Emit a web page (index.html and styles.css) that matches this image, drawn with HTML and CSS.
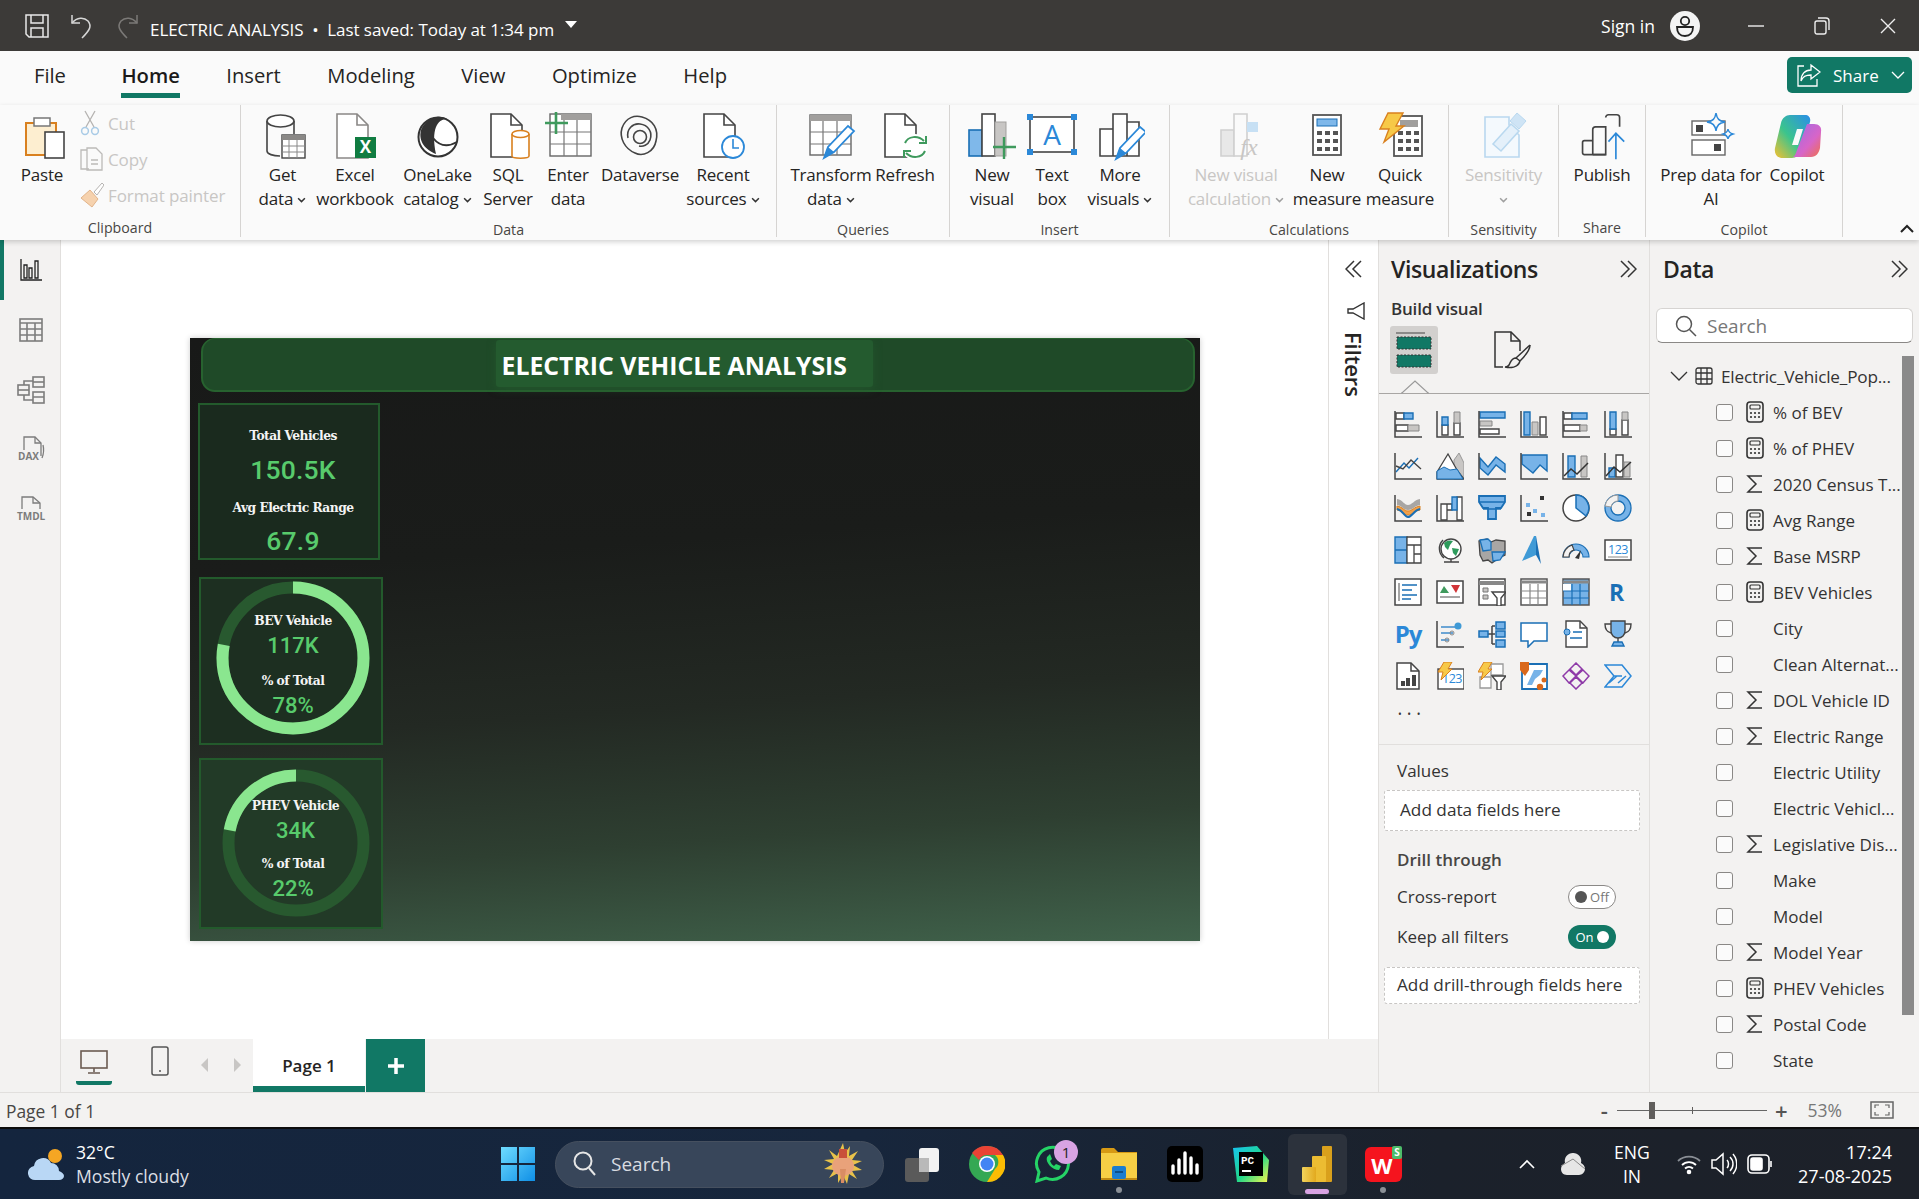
FILE: index.html
```html
<!DOCTYPE html>
<html lang="en">
<head>
    <meta charset="UTF-8">
    <title>ELECTRIC ANALYSIS</title>
    <link rel="stylesheet" href="styles.css">
</head>
<body>
    <svg class="defs" width="0" height="0">
        <defs>
            <symbol id="calc" viewBox="0 0 18 22"><rect x="1" y="1" width="16" height="20" rx="3" fill="none" stroke="#333" stroke-width="1.6"/><rect x="4" y="4" width="10" height="4" rx="1" fill="none" stroke="#333" stroke-width="1.2"/><g fill="#333"><circle cx="5" cy="12" r="1.1"/><circle cx="9" cy="12" r="1.1"/><circle cx="13" cy="12" r="1.1"/><circle cx="5" cy="16" r="1.1"/><circle cx="9" cy="16" r="1.1"/><circle cx="13" cy="16" r="1.1"/></g></symbol>
            <symbol id="sigma" viewBox="0 0 18 22"><path d="M16 3H2l8 8-8 8h14" fill="none" stroke="#333" stroke-width="1.5"/></symbol>
            <symbol id="dbl" viewBox="0 0 18 18"><path d="M2 1l8 8-8 8M9 1l8 8-8 8" fill="none" stroke="#333" stroke-width="1.5"/></symbol>
            <symbol id="caret" viewBox="0 0 8 6"><path d="M1 1l3 3 3-3" fill="none" stroke="#333" stroke-width="1.3"/></symbol>
            <linearGradient id="cop1" x1="0" y1="1" x2="1" y2="0"><stop offset="0" stop-color="#f5c02f"/><stop offset=".45" stop-color="#3bc48d"/><stop offset="1" stop-color="#2a8ee8"/></linearGradient>
            <linearGradient id="cop2" x1="0" y1="0" x2="1" y2="1"><stop offset="0" stop-color="#9a6be8"/><stop offset=".6" stop-color="#d765c8"/><stop offset="1" stop-color="#f0704a"/></linearGradient>
            <linearGradient id="win" x1="0" y1="0" x2="1" y2="1"><stop offset="0" stop-color="#6fdcff"/><stop offset="1" stop-color="#0f8fe6"/></linearGradient>
            <linearGradient id="pbi1" x1="0" y1="0" x2="1" y2="0"><stop offset="0" stop-color="#f2d35c"/><stop offset="1" stop-color="#e2a91e"/></linearGradient>
            <linearGradient id="pyc" x1="0" y1="0" x2="1" y2="1"><stop offset="0" stop-color="#16c3f0"/><stop offset=".55" stop-color="#21d789"/><stop offset="1" stop-color="#fcf84a"/></linearGradient>
        </defs>
    </svg>

    <header class="titlebar">
        <svg class="tb-save" width="24" height="24" viewBox="0 0 24 24" fill="none" stroke="#e8e8e8" stroke-width="1.5"><path d="M1 1h22v22H4l-3-3z"/><path d="M6 1v8h12V1M6 23v-9h12v9"/></svg>
        <svg class="tb-undo" width="22" height="26" viewBox="0 0 22 26" fill="none" stroke="#d6d6d6" stroke-width="1.5"><path d="M1 2v8h8"/><path d="M1 10c5-6 12-6 16-2 4 5 2 9-6 17"/></svg>
        <svg class="tb-redo" width="22" height="26" viewBox="0 0 22 26" fill="none" stroke="#7b7977" stroke-width="1.5"><path d="M21 2v8h-8"/><path d="M21 10c-5-6-12-6-16-2-4 5-2 9 6 17"/></svg>
        <span class="doc-title">ELECTRIC ANALYSIS &nbsp;•&nbsp; Last saved: Today at 1:34 pm</span>
        <span class="doc-caret"></span>
        <span class="sign-in">Sign in</span>
        <svg class="avatar" width="30" height="30" viewBox="0 0 30 30"><circle cx="15" cy="15" r="15" fill="#f4f4f4"/><circle cx="15" cy="10" r="4.2" fill="none" stroke="#222" stroke-width="1.8"/><path d="M7 16h16c0 6-3 9-8 9s-8-3-8-9z" fill="none" stroke="#222" stroke-width="1.8"/></svg>
        <svg class="win-btn win-min" width="16" height="16" viewBox="0 0 16 16"><path d="M0 8h16" stroke="#eee" stroke-width="1.4"/></svg>
        <svg class="win-btn" width="16" height="18" viewBox="0 0 16 18" fill="none" stroke="#eee" stroke-width="1.4"><rect x="1" y="4" width="11" height="13" rx="2"/><path d="M4 1h8a3 3 0 0 1 3 3v9"/></svg>
        <svg class="win-btn" width="16" height="16" viewBox="0 0 16 16"><path d="M1 1l14 14M15 1L1 15" stroke="#eee" stroke-width="1.4"/></svg>
    </header>

    <nav class="tabs">
        <span class="tab tab-file">File</span>
        <span class="tab active">Home</span>
        <span class="tab">Insert</span>
        <span class="tab">Modeling</span>
        <span class="tab">View</span>
        <span class="tab">Optimize</span>
        <span class="tab">Help</span>
        <div class="share">
            <svg width="24" height="24" viewBox="0 0 24 24" fill="none" stroke="#fff" stroke-width="1.3"><path d="M7 3H1v20h19v-7"/><path d="M14 2l9 7-9 7v-4c-5 0-8 1-10 6 0-7 4-11 10-11z"/></svg>
            <span>Share</span>
            <svg width="14" height="8" viewBox="0 0 14 8" fill="none" stroke="#fff" stroke-width="1.3"><path d="M1 1l6 6 6-6"/></svg>
        </div>
    </nav>

    <section class="ribbon">
        <div class="rb-group g1">
            <div class="rb-items">
                <div class="rb-item w60">
                    <svg class="rb-ic" viewBox="0 0 50 50"><path d="M9 11h30v32H9z" fill="#fdeed0" stroke="#d9801f" stroke-width="2"/><rect x="17" y="6" width="16" height="8" fill="#fff" stroke="#777" stroke-width="1.5"/><rect x="28" y="20" width="19" height="26" fill="#fff" stroke="#444" stroke-width="1.6"/></svg>
                    <span class="rb-label">Paste</span>
                </div>
                <div class="small-col">
                    <div class="small-row"><svg class="cut-ic" width="20" height="26" viewBox="0 0 20 26" fill="none"><path d="M5 1l9 16M15 1L6 17" stroke="#b5b3b1" stroke-width="1.3"/><circle cx="5" cy="21" r="3.4" stroke="#a9cbe6" stroke-width="1.5"/><circle cx="15" cy="21" r="3.4" stroke="#a9cbe6" stroke-width="1.5"/></svg><span>Cut</span></div>
                    <div class="small-row"><svg width="24" height="24" viewBox="0 0 24 24" fill="none" stroke="#bcbab8" stroke-width="1.3"><path d="M7 3H1v19h8"/><path d="M7 1h9l6 6v16H7z"/><path d="M11 13h7M11 17h7" /></svg><span>Copy</span></div>
                    <div class="small-row"><svg width="24" height="26" viewBox="0 0 24 26"><path d="M1 16l9-8 8 9-6 8z" fill="#f6d2ae" stroke="#e2b48a"/><path d="M14 10l8-9 2 2-7 10z" fill="#fff" stroke="#b5b3b1"/></svg><span>Format painter</span></div>
                </div>
            </div>
            <div class="rb-name">Clipboard</div>
        </div>
        <div class="rb-group g2">
            <div class="rb-items">
                <div class="rb-item w55">
                    <svg class="rb-ic" viewBox="0 0 50 50"><path d="M9 9v30c0 3 6 5 13 5M36 9v13" fill="none" stroke="#444" stroke-width="1.6"/><ellipse cx="22.5" cy="9" rx="13.5" ry="6" fill="#fff" stroke="#444" stroke-width="1.6"/><rect x="24" y="23" width="23" height="23" fill="#fff" stroke="#444" stroke-width="1.4"/><rect x="24" y="23" width="23" height="5" fill="#8a8886"/><path d="M24 34h23M24 40h23M31 28v18M39 28v18" stroke="#888"/></svg>
                    <span class="rb-label">Get<br>data <svg class="dd"><use href="#caret"/></svg></span>
                </div>
                <div class="rb-item w90">
                    <svg class="rb-ic" viewBox="0 0 50 50"><path d="M7 2h20l11 11v33H7z" fill="#fff" stroke="#8a8886" stroke-width="1.6"/><path d="M27 2v11h11" fill="none" stroke="#8a8886" stroke-width="1.6"/><rect x="25" y="25" width="21" height="21" fill="#107c41"/><text x="35.5" y="41" class="xl">X</text></svg>
                    <span class="rb-label">Excel<br>workbook</span>
                </div>
                <div class="rb-item w75">
                    <svg class="rb-ic" viewBox="0 0 50 50"><circle cx="25" cy="25" r="19.5" fill="#fff" stroke="#333" stroke-width="2"/><path d="M8 18C13 5 27 2 34 7 24 7 18 18 23 42 13 38 5 30 8 18z" fill="#333"/><path d="M20 26c8 10 17 8 24 4" fill="none" stroke="#333" stroke-width="2"/></svg>
                    <span class="rb-label">OneLake<br>catalog <svg class="dd"><use href="#caret"/></svg></span>
                </div>
                <div class="rb-item w66">
                    <svg class="rb-ic" viewBox="0 0 50 50"><path d="M8 2h20l11 11v32H8z" fill="#fff" stroke="#444" stroke-width="1.6"/><path d="M28 2v11h11" fill="none" stroke="#444" stroke-width="1.6"/><path d="M29 22v22c0 3 17 3 17 0V22" fill="#fff" stroke="#d9801f" stroke-width="1.6"/><ellipse cx="37.5" cy="22" rx="8.5" ry="3.5" fill="#fff" stroke="#d9801f" stroke-width="1.6"/></svg>
                    <span class="rb-label">SQL<br>Server</span>
                </div>
                <div class="rb-item w54">
                    <svg class="rb-ic" viewBox="0 0 50 50"><rect x="7" y="2" width="41" height="42" fill="#fff" stroke="#666" stroke-width="1.4"/><rect x="18" y="2" width="30" height="6" fill="#a19f9d"/><path d="M7 20h41M7 32h41M21 8v36M34 8v36" stroke="#777" stroke-width="1.2"/><path d="M2 11h23M13 0v22" stroke="#3f9a5d" stroke-width="2.6"/></svg>
                    <span class="rb-label">Enter<br>data</span>
                </div>
                <div class="rb-item w90">
                    <svg class="rb-ic" viewBox="0 0 50 50" fill="none" stroke="#444" stroke-width="1.6"><path d="M7 16c4-11 13-13 20-11 11 3 17 12 14 24-2 11-13 16-21 12C10 37 4 26 7 16z"/><path d="M13 26c-2-9 5-15 12-14 8 1 13 8 10 16-2 5-7 7-11 6"/><circle cx="25" cy="25" r="6.500"/></svg>
                    <span class="rb-label">Dataverse</span>
                </div>
                <div class="rb-item w76">
                    <svg class="rb-ic" viewBox="0 0 50 50"><path d="M6 2h20l11 11v32H6z" fill="#fff" stroke="#444" stroke-width="1.6"/><path d="M26 2v11h11" fill="none" stroke="#444" stroke-width="1.6"/><circle cx="35" cy="35" r="11" fill="#fff" stroke="#2b88d8" stroke-width="1.8"/><path d="M35 27v9h6" fill="none" stroke="#2b88d8" stroke-width="1.6"/></svg>
                    <span class="rb-label">Recent<br>sources <svg class="dd"><use href="#caret"/></svg></span>
                </div>
            </div>
            <div class="rb-name">Data</div>
        </div>
        <div class="rb-group g3">
            <div class="rb-items">
                <div class="rb-item w90">
                    <svg class="rb-ic" viewBox="0 0 50 50"><rect x="4" y="3" width="41" height="40" fill="#fff" stroke="#666" stroke-width="1.4"/><rect x="4" y="3" width="41" height="6" fill="#a19f9d"/><path d="M4 20h41M4 32h41M17 9v34M31 9v34" stroke="#777" stroke-width="1.2"/><path d="M18 46l4-11 20-21 6 5-20 21z" fill="#fff" stroke="#2b88d8" stroke-width="1.8"/><path d="M18 46l4-11 6 5z" fill="#2b88d8"/></svg>
                    <span class="rb-label">Transform<br>data <svg class="dd"><use href="#caret"/></svg></span>
                </div>
                <div class="rb-item w58">
                    <svg class="rb-ic" viewBox="0 0 50 50"><path d="M5 2h20l11 11v32H5z" fill="#fff" stroke="#444" stroke-width="1.6"/><path d="M25 2v11h11" fill="none" stroke="#444" stroke-width="1.6"/><circle cx="35" cy="35" r="13" fill="#fff"/><path d="M25 31c3-7 13-8 19-2M45 39c-3 7-13 8-19 2" fill="none" stroke="#3f9a5d" stroke-width="2"/><path d="M46 24v7h-7M24 46v-7h7" fill="none" stroke="#3f9a5d" stroke-width="2"/></svg>
                    <span class="rb-label">Refresh</span>
                </div>
            </div>
            <div class="rb-name">Queries</div>
        </div>
        <div class="rb-group g4">
            <div class="rb-items">
                <div class="rb-item w64">
                    <svg class="rb-ic" viewBox="0 0 50 50"><rect x="2" y="18" width="13" height="26" fill="#7fb8ea" stroke="#1a6fb5" stroke-width="1.6"/><rect x="15" y="2" width="13" height="42" fill="#fff" stroke="#444" stroke-width="1.6"/><rect x="28" y="10" width="11" height="34" fill="#c8c6c4" stroke="#a19f9d"/><path d="M26 35h23M37 25v22" stroke="#3f9a5d" stroke-width="2.4"/></svg>
                    <span class="rb-label">New<br>visual</span>
                </div>
                <div class="rb-item w56">
                    <svg class="rb-ic" viewBox="0 0 50 50"><rect x="3" y="5" width="44" height="35" fill="#fff" stroke="#444" stroke-width="1.6"/><g fill="#2b88d8"><rect y="2" width="6" height="6"/><rect x="44" y="2" width="6" height="6"/><rect y="37" width="6" height="6"/><rect x="44" y="37" width="6" height="6"/></g><text x="25" y="33" class="a-box">A</text></svg>
                    <span class="rb-label">Text<br>box</span>
                </div>
                <div class="rb-item w80">
                    <svg class="rb-ic" viewBox="0 0 50 50"><path d="M5 17h13v27H5zM18 2h14v42H18zM32 10h12v34H32z" fill="#fff" stroke="#444" stroke-width="1.6"/><path d="M21 47l4-11 20-21 6 5-20 21z" fill="#fff" stroke="#2b88d8" stroke-width="1.8"/><path d="M21 47l4-11 6 5z" fill="#2b88d8"/></svg>
                    <span class="rb-label">More<br>visuals <svg class="dd"><use href="#caret"/></svg></span>
                </div>
            </div>
            <div class="rb-name">Insert</div>
        </div>
        <div class="rb-group g5">
            <div class="rb-items">
                <div class="rb-item w112 disabled">
                    <svg class="rb-ic" viewBox="0 0 50 50"><path d="M10 18h13v26H10z" fill="#e8e8e8" stroke="#d0d0d0" stroke-width="1.6"/><path d="M23 2h13v42H23z" fill="#fafafa" stroke="#d0d0d0" stroke-width="1.6"/><path d="M36 10h11v10H36z" fill="#c7e0f4"/><text x="38" y="43" class="fx">fx</text></svg>
                    <span class="rb-label">New visual<br>calculation <svg class="dd"><use href="#caret"/></svg></span>
                </div>
                <div class="rb-item w70">
                    <svg class="rb-ic" viewBox="0 0 50 50"><rect x="11" y="3" width="28" height="40" fill="#fff" stroke="#555" stroke-width="1.8"/><rect x="15" y="7" width="20" height="7" fill="#7fb8ea" stroke="#1a6fb5"/><path d="M15 19h5v4h-5zM23 19h5v4h-5zM31 19h5v4h-5zM15 27h5v4h-5zM23 27h5v4h-5zM31 27h5v4h-5zM15 35h5v4h-5zM23 35h5v4h-5zM31 35h5v4h-5z" fill="#555"/></svg>
                    <span class="rb-label">New<br>measure</span>
                </div>
                <div class="rb-item w76">
                    <svg class="rb-ic" viewBox="0 0 50 50"><rect x="19" y="4" width="28" height="40" fill="#fff" stroke="#555" stroke-width="1.8"/><rect x="25" y="8" width="18" height="7" fill="#a19f9d"/><path d="M23 19h5v4h-5zM31 19h5v4h-5zM39 19h5v4h-5zM23 27h5v4h-5zM31 27h5v4h-5zM39 27h5v4h-5zM23 35h5v4h-5zM31 35h5v4h-5zM39 35h5v4h-5z" fill="#555"/><path d="M13 1h15l-7 13h8L9 30l5-13H5z" fill="#f7c948" stroke="#d9801f" stroke-width="1.4"/></svg>
                    <span class="rb-label">Quick<br>measure</span>
                </div>
            </div>
            <div class="rb-name">Calculations</div>
        </div>
        <div class="rb-group g6">
            <div class="rb-items">
                <div class="rb-item w109 disabled">
                    <svg class="rb-ic" viewBox="0 0 50 50"><path d="M6 5h24v8l10 10v22H6z" fill="#f4f9fd" stroke="#b9d8ef" stroke-width="1.6"/><path d="M14 32l18-20 8 7-18 20z" fill="#e4f0fa" stroke="#b9d8ef" stroke-width="1.6"/><path d="M31 9l7-8 9 8-7 8z" fill="#cfe4f5" stroke="#b9d8ef"/></svg>
                    <span class="rb-label">Sensitivity<br><svg class="dd"><use href="#caret"/></svg></span>
                </div>
            </div>
            <div class="rb-name">Sensitivity</div>
        </div>
        <div class="rb-group g7">
            <div class="rb-items">
                <div class="rb-item w86">
                    <svg class="rb-ic" viewBox="-3 -1 54 54" fill="none"><path d="M3 32a2 2 0 0 1 2-2h9v15H5a2 2 0 0 1-2-2zM14 18a3 3 0 0 1 3-3h11v30H14zM28 5a3 3 0 0 1 3-3h9a3 3 0 0 1 3 3v10" stroke="#444" stroke-width="1.8"/><path d="M28 45H14" stroke="#444" stroke-width="1.8"/><path d="M39 50V22M31 31l8-9 9 9" stroke="#2b88d8" stroke-width="1.8"/></svg>
                    <span class="rb-label">Publish</span>
                </div>
            </div>
            <div class="rb-name">Share</div>
        </div>
        <div class="rb-group g8">
            <div class="rb-items">
                <div class="rb-item w130">
                    <svg class="rb-ic" viewBox="0 0 50 50" fill="none"><rect x="6" y="9" width="33" height="14" fill="#fff" stroke="#666" stroke-width="1.4"/><rect x="10" y="13" width="7" height="7" fill="#444"/><rect x="6" y="28" width="33" height="15" fill="#fff" stroke="#666" stroke-width="1.4"/><rect x="28" y="32" width="7" height="7" fill="#444"/><path d="M30 1c1 6 3 8 9 9-6 1-8 3-9 9-1-6-3-8-9-9 6-1 8-3 9-9z" fill="#fafafa" stroke="#2b88d8" stroke-width="1.5"/><path d="M42 17c.5 3 1.500 4 5 5-3.500 1-4.500 2-5 5-.5-3-1.500-4-5-5 3.500-1 4.500-2 5-5z" fill="#fafafa" stroke="#2b88d8" stroke-width="1.4"/></svg>
                    <span class="rb-label">Prep data for<br>AI</span>
                </div>
                <div class="rb-item w42">
                    <svg class="rb-ic" viewBox="0 0 50 50"><path d="M18 3h15c4 0 6 3 5 7l-9 29c-1 4-5 7-9 7H11C5 46 2 42 3 36l6-25c1-5 5-8 9-8z" fill="url(#cop1)"/><path d="M21 45h18c5 0 8-4 9-9l1-16c1-5-2-8-7-8h-7L25 38c-1 3-2 6-4 7z" fill="url(#cop2)"/><path d="M25 17h6l-5 16h-6z" fill="#fafafa"/></svg>
                    <span class="rb-label">Copilot</span>
                </div>
            </div>
            <div class="rb-name">Copilot</div>
        </div>
        <svg class="collapse" width="14" height="9" viewBox="0 0 14 9" fill="none" stroke="#222" stroke-width="2"><path d="M1 8l6-6 6 6"/></svg>
    </section>

    <main class="main">
        <aside class="rail">
            <div class="rail-btn on"><svg width="22" height="22" viewBox="0 0 22 22" fill="none" stroke="#222" stroke-width="1.300"><path d="M1 0v21h21"/><path d="M4 6h3v13H4zM9 9h3v10H9zM15 2h3v17h-3z"/></svg></div>
            <div class="rail-btn"><svg width="24" height="24" viewBox="0 0 24 24" fill="none" stroke="#7c7c7c" stroke-width="1.6"><rect x="1" y="1" width="22" height="22"/><path d="M1 5h22M1 11h22M1 17h22M8 5v18M16 5v18"/></svg></div>
            <div class="rail-btn"><svg width="28" height="28" viewBox="0 0 28 28" fill="none" stroke="#7c7c7c" stroke-width="1.6"><rect x="1" y="9" width="11" height="10"/><path d="M1 14h11"/><rect x="16" y="1" width="11" height="10"/><path d="M16 6h11"/><rect x="16" y="16" width="11" height="11"/><path d="M16 21h11M7 9V5h9M7 19v5h9"/></svg></div>
            <div class="rail-btn"><svg width="30" height="30" viewBox="0 0 30 30"><path d="M8 15V2h11l6 6v13" fill="none" stroke="#7c7c7c" stroke-width="1.300"/><path d="M19 2v6h6M27 10c1 4 1 8-1 13" fill="none" stroke="#7c7c7c" stroke-width="1.300"/><text x="2" y="25" class="rail-tx">DAX</text></svg></div>
            <div class="rail-btn"><svg width="34" height="30" viewBox="0 0 34 30"><path d="M8 14V2h11l7 6v6" fill="none" stroke="#7c7c7c" stroke-width="1.300"/><path d="M19 2v6h7" fill="none" stroke="#7c7c7c" stroke-width="1.300"/><text x="3" y="25" class="rail-tx">TMDL</text></svg></div>
        </aside>

        <div class="center">
            <div class="canvas-row">
                <div class="canvas">
                    <div class="report">
                        <div class="rep-head"><div class="rep-title">ELECTRIC VEHICLE ANALYSIS</div></div>
                        <div class="card card-total">
                            <div class="c-label">Total Vehicles</div>
                            <div class="c-value big">150.5K</div>
                            <div class="c-label second">Avg Electric Range</div>
                            <div class="c-value big">67.9</div>
                        </div>
                        <div class="card card-bev">
                            <svg class="ring ring-bev" width="160" height="160" viewBox="0 0 160 160"><circle cx="80" cy="80" r="70.500" class="track"/><circle cx="80" cy="80" r="70.500" class="arc" pathLength="100" stroke-dasharray="78 22" transform="rotate(-90 80 80)"/></svg>
                            <div class="c-label">BEV Vehicle</div>
                            <div class="c-value">117K</div>
                            <div class="c-label second">% of Total</div>
                            <div class="c-value">78%</div>
                        </div>
                        <div class="card card-phev">
                            <svg class="ring ring-phev" width="150" height="150" viewBox="0 0 150 150"><circle cx="75" cy="75" r="67.500" class="track"/><circle cx="75" cy="75" r="67.500" class="arc" pathLength="100" stroke-dasharray="22 78" transform="translate(75 75) rotate(-90) scale(1 -1) translate(-75 -75)"/></svg>
                            <div class="c-label">PHEV Vehicle</div>
                            <div class="c-value">34K</div>
                            <div class="c-label second">% of Total</div>
                            <div class="c-value">22%</div>
                        </div>
                    </div>
                </div>
                <div class="filters">
                    <svg class="fil-chev" width="18" height="18" viewBox="0 0 18 18" fill="none" stroke="#333" stroke-width="1.5"><path d="M16 1L8 9l8 8M9 1L1 9l8 8"/></svg>
                    <svg class="fil-funnel" width="18" height="18" viewBox="0 0 18 18" fill="none" stroke="#333" stroke-width="1.4"><path d="M17 1v16L6 11H1V7h5z"/></svg>
                    <div class="fil-text">Filters</div>
                </div>
            </div>
            <div class="pagebar">
                <div class="view-btn desktop"><svg width="28" height="24" viewBox="0 0 28 24" fill="none" stroke="#6b5b52" stroke-width="1.6"><rect x="1" y="1" width="26" height="17"/><path d="M14 18v4M8 23h12"/></svg></div>
                <div class="view-btn phone"><svg width="18" height="30" viewBox="0 0 18 30" fill="none" stroke="#555" stroke-width="1.5"><rect x="1" y="1" width="16" height="28" rx="2"/><path d="M8 25h2"/></svg></div>
                <svg class="pg-arrow" width="8" height="16" viewBox="0 0 8 16"><path d="M8 1v14L1 8z" fill="#c8c6c4"/></svg>
                <svg class="pg-arrow next" width="8" height="16" viewBox="0 0 8 16"><path d="M0 1v14l7-7z" fill="#c8c6c4"/></svg>
                <div class="page-tab">Page 1</div>
                <div class="page-add"><svg width="18" height="18" viewBox="0 0 18 18"><path d="M9 1v16M1 9h16" stroke="#fff" stroke-width="3.500"/></svg></div>
            </div>
        </div>

        <aside class="viz">
            <div class="pane-head"><span>Visualizations</span><svg width="18" height="18"><use href="#dbl"/></svg></div>
            <div class="build-label">Build visual</div>
            <div class="build-row">
                <div class="build-tile"><svg width="36" height="36" viewBox="0 0 36 36"><path d="M0 1h29" stroke="#444"/><rect x="1" y="5" width="34" height="12" fill="#117865" stroke="#333" stroke-dasharray="2 1.500"/><rect x="1" y="23" width="34" height="12" fill="#117865" stroke="#333" stroke-dasharray="2 1.500"/></svg></div>
                <svg class="fmt-ic" width="38" height="38" viewBox="0 0 38 38" fill="none" stroke="#333" stroke-width="1.500"><path d="M9 36H1V1h16l9 9v10"/><path d="M17 1v9h9"/><path d="M36 14L22 27"/><path d="M36 14c0 6-6 12-10 16M22 27c-4 0-5 3-6 5-1 3-3 4-5 4 5 1 13 1 15-6z"/></svg>
            </div>
            <div class="notch-line"><svg class="notch" width="28" height="14" viewBox="0 0 28 14" fill="none"><path d="M0 13h1L14 1l13 12h1" fill="#f3f2f1" stroke="#999" stroke-width="1.2"/></svg></div>
            <div class="gallery">
                <svg class="gi" viewBox="0 0 28 28"><path d="M2 3h8v6H2zM2 15h12v6H2z" fill="#fff" stroke="#444" stroke-width="1.400"/><path d="M10 3h9v6h-9z" fill="#77b3e8" stroke="#1a6fb5" stroke-width="1.400"/><path d="M14 15h11v6H14z" fill="#c8c6c4" stroke="#888"/><path d="M1 1v26h27" class="ax"/></svg>
                <svg class="gi" viewBox="0 0 28 28"><path d="M6 15h6v10H6zM18 13h6v12h-6z" fill="#fff" stroke="#444" stroke-width="1.400"/><path d="M6 7h6v8H6z" fill="#77b3e8" stroke="#1a6fb5" stroke-width="1.400"/><path d="M18 2h6v11h-6z" fill="#c8c6c4" stroke="#888"/><path d="M1 1v26h27" class="ax"/></svg>
                <svg class="gi" viewBox="0 0 28 28"><path d="M2 2h25v6H2z" fill="#77b3e8" stroke="#1a6fb5" stroke-width="1.400"/><path d="M2 11h12v5H2z" fill="#c8c6c4" stroke="#888"/><path d="M2 19h19v5H2z" fill="#fff" stroke="#444" stroke-width="1.400"/><path d="M1 1v26h27" class="ax"/></svg>
                <svg class="gi" viewBox="0 0 28 28"><path d="M4 2h6v23H4z" fill="#77b3e8" stroke="#1a6fb5" stroke-width="1.400"/><path d="M12 12h6v13h-6z" fill="#c8c6c4" stroke="#888"/><path d="M20 7h6v18h-6z" fill="#fff" stroke="#444" stroke-width="1.400"/><path d="M1 1v26h27" class="ax"/></svg>
                <svg class="gi" viewBox="0 0 28 28"><path d="M2 3h8v6H2zM2 15h16v6H2z" fill="#fff" stroke="#444" stroke-width="1.400"/><path d="M10 3h15v6H10z" fill="#77b3e8" stroke="#1a6fb5" stroke-width="1.400"/><path d="M18 15h7v6h-7z" fill="#c8c6c4" stroke="#888"/><path d="M1 1v26h27" class="ax"/></svg>
                <svg class="gi" viewBox="0 0 28 28"><path d="M6 19h6v6H6zM18 10h6v15h-6z" fill="#fff" stroke="#444" stroke-width="1.400"/><path d="M6 2h6v17H6z" fill="#77b3e8" stroke="#1a6fb5" stroke-width="1.400"/><path d="M18 2h6v8h-6z" fill="#c8c6c4" stroke="#888"/><path d="M1 1v26h27" class="ax"/></svg>

                <svg class="gi" viewBox="0 0 28 28"><path d="M2 20l8-9 5 5 9-10" fill="none" stroke="#1a6fb5" stroke-width="1.400"/><path d="M2 14l7 3 8-9 10 9" fill="none" stroke="#444" stroke-width="1.400"/><path d="M1 1v26h27" class="ax"/></svg>
                <svg class="gi" viewBox="0 0 28 28"><path d="M18 8l5-7 5 10v16H18z" fill="#c8c6c4" stroke="#999"/><path d="M1 20L12 2l9 16 7 9H1z" fill="#fff" stroke="#444" stroke-width="1.300"/><path d="M1 27v-8l7-4 6 3 7-1 6 10z" fill="#77b3e8" stroke="#1a6fb5"/></svg>
                <svg class="gi" viewBox="0 0 28 28"><path d="M2 6l8 9 8-10 9 7v8l-9-7-8 10-8-7z" fill="#77b3e8" stroke="#1a6fb5" stroke-width="1.400"/><path d="M1 1v26h27" class="ax"/></svg>
                <svg class="gi" viewBox="0 0 28 28"><path d="M2 3h25v16l-7-6-7 8-11-9z" fill="#77b3e8" stroke="#1a6fb5" stroke-width="1.400"/><path d="M1 1v26h27" class="ax"/></svg>
                <svg class="gi" viewBox="0 0 28 28"><path d="M6 4h7v21H6z" fill="#77b3e8" stroke="#1a6fb5" stroke-width="1.400"/><path d="M19 4h6v21h-6z" fill="#c8c6c4" stroke="#888"/><path d="M2 24l7-7 6 5 11-11" fill="none" stroke="#333" stroke-width="1.500"/><path d="M1 1v26h27" class="ax"/></svg>
                <svg class="gi" viewBox="0 0 28 28"><path d="M5 16h6v9H5z" fill="#77b3e8" stroke="#1a6fb5" stroke-width="1.400"/><path d="M12 3h7v22h-7z" fill="#fff" stroke="#444" stroke-width="1.400"/><path d="M20 10h6v15h-6z" fill="#c8c6c4" stroke="#888"/><path d="M2 24l8-9 6 5 11-10" fill="none" stroke="#333" stroke-width="1.500"/><path d="M1 1v26h27" class="ax"/></svg>

                <svg class="gi" viewBox="0 0 28 28"><path d="M3 5c6 1 7 6 11 6s6-5 12-6v6c-6 1-7 5-12 5S9 12 3 11z" fill="#a8a6a4"/><path d="M3 12c6 1 7 5 11 5s6-4 12-5v4c-6 1-7 5-12 5s-5-4-11-5z" fill="#f0a04b" stroke="#d9801f"/><path d="M3 15c6 1 7 8 11 8s6-7 12-8" fill="none" stroke="#1a6fb5" stroke-width="2"/><path d="M1 1v26h27" class="ax"/></svg>
                <svg class="gi" viewBox="0 0 28 28"><path d="M5 10h6v16H5zM11 10h5v6h-5zM21 3h5v23h-5z" fill="#fff" stroke="#444" stroke-width="1.300"/><path d="M16 3h5v13h-5z" fill="#77b3e8" stroke="#1a6fb5" stroke-width="1.300"/><path d="M1 1v26h27" class="ax"/></svg>
                <svg class="gi" viewBox="0 0 28 28"><path d="M1 2h26v6l-4 6h-5v11H10V14H5L1 8z" fill="#77b3e8" stroke="#1a6fb5" stroke-width="1.800"/><path d="M1 8h26M5 15h18" stroke="#1a6fb5" stroke-width="1.400"/></svg>
                <svg class="gi" viewBox="0 0 28 28"><path d="M6 9h4v4H6zM13 15h4v4h-4zM21 19h4v4h-4z" fill="#77b3e8"/><path d="M7 18h4v4H7zM20 2h4v4h-4z" fill="#333"/><path d="M1 1v26h27" class="ax"/></svg>
                <svg class="gi" viewBox="0 0 28 28"><circle cx="14" cy="14" r="13" fill="#fff" stroke="#444" stroke-width="1.500"/><path d="M14 1a13 13 0 0 1 10 21L14 14z" fill="#77b3e8" stroke="#1a6fb5" stroke-width="1.500"/></svg>
                <svg class="gi" viewBox="0 0 28 28"><circle cx="14" cy="14" r="10" fill="none" stroke="#77b3e8" stroke-width="6"/><circle cx="14" cy="14" r="13" fill="none" stroke="#1a6fb5" stroke-width="1.300"/><circle cx="14" cy="14" r="7" fill="none" stroke="#1a6fb5" stroke-width="1.300"/><path d="M1 12A13 13 0 0 1 14 1v6a7 7 0 0 0-7 6z" fill="#f3f2f1" stroke="#999"/></svg>

                <svg class="gi" viewBox="0 0 28 28"><path d="M1 1h12v13H1zM1 14h12v13H1z" fill="#77b3e8" stroke="#1a6fb5" stroke-width="1.400"/><path d="M13 1h14v8H13zM13 9h7v18h-7zM20 9h7v9h-7zM20 18h7v9h-7z" fill="#fff" stroke="#444" stroke-width="1.300"/></svg>
                <svg class="gi" viewBox="0 0 28 28"><circle cx="15" cy="13" r="10" fill="#fff" stroke="#444" stroke-width="1.400"/><path d="M8 7c3-3 7-3 9-2l-3 4-2 5-3-3zM16 12l7 1-3 7-3-3z" fill="#2e9b5c"/><path d="M7 4a12 12 0 0 0 1 18M8 26h15M15 23v3" fill="none" stroke="#444" stroke-width="1.400"/></svg>
                <svg class="gi" viewBox="0 0 28 28"><path d="M1 5l8-2 4 3 5-2 9 1v14l-6 3-7 5-4-3-5 1-3-6z" fill="#a8a6a4" stroke="#444" stroke-width="1.300"/><path d="M2 4l8-1 3 3v8l-8 1zM14 16h13l-5 8-7 1z" fill="#77b3e8" stroke="#1a6fb5" stroke-width="1.300"/></svg>
                <svg class="gi" viewBox="0 0 28 28"><path d="M16 0l-2 0L2 25l14-6z" fill="#3f9ad6"/><path d="M16 0l5 28-5-9z" fill="#1a6fb5"/></svg>
                <svg class="gi" viewBox="0 0 28 28"><path d="M1 21a13 13 0 0 1 26 0h-6a7 7 0 0 0-14 0z" fill="#77b3e8" stroke="#1a6fb5" stroke-width="1.200"/><path d="M1 21a13 13 0 0 1 9-12l2 5a7 7 0 0 0-5 7z" fill="#f3f2f1" stroke="#444" stroke-width="1.200"/><path d="M13 22l6-8-2 9z" fill="#333"/></svg>
                <svg class="gi" viewBox="0 0 28 28"><rect x="1" y="4" width="26" height="20" fill="#fff" stroke="#444" stroke-width="1.500"/><text x="14" y="18" class="gi-num">123</text><path d="M4 21h20" stroke="#888"/></svg>

                <svg class="gi" viewBox="0 0 28 28"><rect x="1" y="1" width="26" height="26" fill="#fff" stroke="#444" stroke-width="1.500"/><path d="M5 5v18" stroke="#888" stroke-width="1.500"/><path d="M8 7h15M8 12h10M8 17h15M8 21h9" stroke="#1a6fb5" stroke-width="1.600"/></svg>
                <svg class="gi" viewBox="0 0 28 28"><rect x="1" y="3" width="26" height="22" fill="#fff" stroke="#444" stroke-width="1.500"/><path d="M4 15l4-7 5 7z" fill="#3f9a5d"/><path d="M15 7h9l-4 8z" fill="#d13438"/><path d="M4 19h20" stroke="#888" stroke-width="1.500"/></svg>
                <svg class="gi" viewBox="0 0 28 28"><rect x="1" y="1" width="26" height="26" fill="#fff" stroke="#444" stroke-width="1.500"/><path d="M1 5h26" stroke="#888" stroke-width="4"/><path d="M5 10h5v4H5zM5 17h5v4H5z" fill="#c8c6c4" stroke="#777"/><path d="M14 14h14l-5 6v8h-4v-8z" fill="#fff" stroke="#444" stroke-width="1.400"/></svg>
                <svg class="gi" viewBox="0 0 28 28"><rect x="1" y="1" width="26" height="26" fill="#fff" stroke="#555" stroke-width="1.500"/><path d="M1 4h26" stroke="#888" stroke-width="3"/><path d="M1 13h26M1 20h26M10 6v21M18 6v21" stroke="#888" stroke-width="1.200"/></svg>
                <svg class="gi" viewBox="0 0 28 28"><rect x="1" y="1" width="26" height="26" fill="#77b3e8" stroke="#555" stroke-width="1.500"/><path d="M1 4h26" stroke="#888" stroke-width="3"/><path d="M1 6h8v7H1z" fill="#fff"/><path d="M1 13h26M1 20h26M10 6v21M18 6v21" stroke="#1a6fb5" stroke-width="1.200"/></svg>
                <div class="gi-text gi-r">R</div>

                <div class="gi-text gi-py">Py</div>
                <svg class="gi" viewBox="0 0 28 28" fill="none"><path d="M1 1v26h27" class="ax"/><path d="M5 7h14M5 13h12M5 20h8" stroke="#3f8ccb" stroke-width="1.300"/><circle cx="22" cy="6" r="3.500" fill="#3f9ad6"/><circle cx="16" cy="13" r="2" stroke="#888"/><circle cx="11" cy="20" r="2" stroke="#888"/></svg>
                <svg class="gi" viewBox="0 0 28 28" fill="none"><path d="M10 14h4M14 6v18M14 6h3M14 14h3M14 24h3" stroke="#444" stroke-width="1.500"/><rect x="1" y="11" width="9" height="6" fill="#77b3e8" stroke="#1a6fb5" stroke-width="1.500"/><rect x="18" y="2" width="9" height="7" fill="#77b3e8" stroke="#1a6fb5" stroke-width="1.500"/><rect x="18" y="11" width="9" height="6" fill="#77b3e8" stroke="#1a6fb5" stroke-width="1.500"/><rect x="18" y="20" width="9" height="7" fill="#77b3e8" stroke="#1a6fb5" stroke-width="1.500"/></svg>
                <svg class="gi" viewBox="0 0 28 28"><path d="M1 3h26v18H14l-6 6v-6H1z" fill="#fff" stroke="#1a6fb5" stroke-width="1.500"/></svg>
                <svg class="gi" viewBox="0 0 28 28" fill="none"><path d="M4 1h14l7 7v19H4z" fill="#fff" stroke="#444" stroke-width="1.400"/><path d="M18 1v7h7" stroke="#444" stroke-width="1.400"/><circle cx="5" cy="12" r="3" fill="#77b3e8" stroke="#1a6fb5"/><path d="M11 12h9M8 18h12" stroke="#1a6fb5" stroke-width="1.400"/></svg>
                <svg class="gi" viewBox="0 0 28 28" fill="none"><path d="M7 1h14v10c0 4-3 7-7 7s-7-3-7-7z" fill="#77b3e8" stroke="#444" stroke-width="1.400"/><path d="M7 4H1c0 6 2 8 6 9M21 4h6c0 6-2 8-6 9M14 18v4" stroke="#444" stroke-width="1.400"/><path d="M8 26l2-4h8l2 4z" fill="#77b3e8" stroke="#1a6fb5" stroke-width="1.400"/></svg>

                <svg class="gi" viewBox="0 0 28 28" fill="none"><path d="M3 1h14l8 8v18H3z" fill="#fff" stroke="#444" stroke-width="1.500"/><path d="M17 1v8h8" stroke="#444" stroke-width="1.500"/><path d="M7 19h4v5H7zM12 16h4v8h-4zM18 13h4v11h-4z" fill="#444"/></svg>
                <svg class="gi" viewBox="0 0 28 28"><rect x="2" y="7" width="26" height="20" fill="#fff" stroke="#444" stroke-width="1.400"/><text x="16" y="21" class="gi-num">123</text><path d="M8 0h8l-4 7h4L5 18l2-8H2z" fill="#f7c948" stroke="#d9801f"/></svg>
                <svg class="gi" viewBox="0 0 28 28"><path d="M13 2h12v11H13zM2 15h11v11H2z" fill="#fff" stroke="#999" stroke-width="1.300"/><path d="M14 14h14l-5 6v8h-4v-8z" fill="#fff" stroke="#444" stroke-width="1.400"/><path d="M6 0h8l-4 7h4L3 18l2-8H0z" fill="#f7c948" stroke="#d9801f"/></svg>
                <svg class="gi" viewBox="0 0 28 28"><path d="M2 2h25v25H2z" fill="#fff" stroke="#1a6fb5" stroke-width="1.800"/><path d="M14 8h9l-3 5-5 4-3 6H7z" fill="#77b3e8"/><path d="M0 0h9v8l-4 6-5-6z" fill="#d9681c"/><circle cx="24" cy="18" r="2.500" fill="#d9681c"/><circle cx="20" cy="25" r="3.200" fill="#d9681c"/></svg>
                <svg class="gi" viewBox="0 0 28 28" fill="none" stroke="#8e3aa8" stroke-width="1.500"><path d="M8 7l6-6 6 6-6 6zM1 14l6-6 7 6-7 7zM14 14l7-6 6 6-6 7zM8 21l6-6 6 6-6 6z"/></svg>
                <svg class="gi" viewBox="0 0 28 28" fill="none" stroke="#2b88d8" stroke-width="1.500"><path d="M1 3h17l9 11-9 11H1l9-11zM9 14h9M5 21l8-7M14 21l8-7"/></svg>

                <div class="gi-more">• • •</div>
            </div>
            <div class="well-title">Values</div>
            <div class="well">Add data fields here</div>
            <div class="drill">Drill through</div>
            <div class="toggle-row"><span>Cross-report</span><div class="toggle off"><i></i><b>Off</b></div></div>
            <div class="toggle-row"><span>Keep all filters</span><div class="toggle on"><b>On</b><i></i></div></div>
            <div class="well well-drill">Add drill-through fields here</div>
        </aside>

        <aside class="data">
            <div class="pane-head data-head"><span>Data</span><svg width="18" height="18"><use href="#dbl"/></svg></div>
            <div class="data-search">
                <svg width="22" height="22" viewBox="0 0 22 22" fill="none" stroke="#555" stroke-width="1.500"><circle cx="9" cy="9" r="7.500"/><path d="M14.500 14.500L21 21"/></svg>
                <span>Search</span>
            </div>
            <div class="tree-root">
                <svg width="18" height="10" viewBox="0 0 18 10" fill="none" stroke="#333" stroke-width="1.300"><path d="M1 1l8 8 8-8"/></svg>
                <svg width="18" height="18" viewBox="0 0 18 18" fill="none" stroke="#333" stroke-width="1.300"><rect x="1" y="1" width="16" height="16" rx="2"/><path d="M1 6h16M1 12h16M6 1v16M12 1v16"/></svg>
                <span>Electric_Vehicle_Pop...</span>
            </div>
            <div class="field"><i class="chk"></i><svg class="f-ic"><use href="#calc"/></svg><span>% of BEV</span></div>
            <div class="field"><i class="chk"></i><svg class="f-ic"><use href="#calc"/></svg><span>% of PHEV</span></div>
            <div class="field"><i class="chk"></i><svg class="f-ic"><use href="#sigma"/></svg><span>2020 Census T...</span></div>
            <div class="field"><i class="chk"></i><svg class="f-ic"><use href="#calc"/></svg><span>Avg Range</span></div>
            <div class="field"><i class="chk"></i><svg class="f-ic"><use href="#sigma"/></svg><span>Base MSRP</span></div>
            <div class="field"><i class="chk"></i><svg class="f-ic"><use href="#calc"/></svg><span>BEV Vehicles</span></div>
            <div class="field"><i class="chk"></i><svg class="f-ic"></svg><span>City</span></div>
            <div class="field"><i class="chk"></i><svg class="f-ic"></svg><span>Clean Alternat...</span></div>
            <div class="field"><i class="chk"></i><svg class="f-ic"><use href="#sigma"/></svg><span>DOL Vehicle ID</span></div>
            <div class="field"><i class="chk"></i><svg class="f-ic"><use href="#sigma"/></svg><span>Electric Range</span></div>
            <div class="field"><i class="chk"></i><svg class="f-ic"></svg><span>Electric Utility</span></div>
            <div class="field"><i class="chk"></i><svg class="f-ic"></svg><span>Electric Vehicl...</span></div>
            <div class="field"><i class="chk"></i><svg class="f-ic"><use href="#sigma"/></svg><span>Legislative Dis...</span></div>
            <div class="field"><i class="chk"></i><svg class="f-ic"></svg><span>Make</span></div>
            <div class="field"><i class="chk"></i><svg class="f-ic"></svg><span>Model</span></div>
            <div class="field"><i class="chk"></i><svg class="f-ic"><use href="#sigma"/></svg><span>Model Year</span></div>
            <div class="field"><i class="chk"></i><svg class="f-ic"><use href="#calc"/></svg><span>PHEV Vehicles</span></div>
            <div class="field"><i class="chk"></i><svg class="f-ic"><use href="#sigma"/></svg><span>Postal Code</span></div>
            <div class="field"><i class="chk"></i><svg class="f-ic"></svg><span>State</span></div>
            <div class="scrollbar"></div>
        </aside>
    </main>

    <footer class="status">
        <span class="status-page">Page 1 of 1</span>
        <div class="zoom">
            <span class="z-minus">-</span>
            <div class="z-track"><i class="z-thumb"></i><i class="z-tick"></i></div>
            <span class="z-plus">+</span>
            <span class="z-pct">53%</span>
            <svg width="24" height="18" viewBox="0 0 24 18" fill="none"><rect x="1" y="1" width="22" height="16" stroke="#666" stroke-width="1.500"/><path d="M5 7V4h4M19 7V4h-4M5 11v3h4M19 11v3h-4" stroke="#666" stroke-width="1.200"/></svg>
        </div>
    </footer>

    <div class="taskbar">
        <div class="weather">
            <svg width="38" height="34" viewBox="0 0 38 34"><circle cx="27" cy="9" r="7" fill="#f5a623"/><path d="M8 33a7 7 0 0 1-2-14 9 9 0 0 1 17-3 8 8 0 0 1 8 8c3 1 5 3 5 5s-2 4-5 4z" fill="#b9d7f5"/></svg>
            <div class="w-text"><div>32°C</div><div class="w-sub">Mostly cloudy</div></div>
        </div>
        <svg class="start" width="36" height="36" viewBox="0 0 36 36"><path d="M1 1h16v16H1zM19 1h16v16H19zM1 19h16v16H1zM19 19h16v16H19z" fill="url(#win)"/></svg>
        <div class="tb-search">
            <svg width="24" height="26" viewBox="0 0 24 26" fill="none" stroke="#e6e6e6" stroke-width="2"><circle cx="10" cy="10" r="8.500"/><path d="M16 17l6 7"/></svg>
            <span>Search</span>
            <svg class="ganesh" width="46" height="46" viewBox="0 0 46 46"><path d="M23 2l2 10 5-7-1 10 9-5-6 9 10 1-9 4 9 5-10 1 5 8-8-5-2 10-4-9-5 8 0-10-9 5 5-8-10-1 9-5-9-4 10-1-5-9 8 6z" fill="#e8c24a"/><ellipse cx="23" cy="25" rx="11" ry="10" fill="#e9a27a"/><path d="M20 28h6l-2 14h-3z" fill="#d98d63"/><rect x="19" y="8" width="8" height="9" fill="#c9503a"/></svg>
        </div>
        <div class="tb-app"><svg width="38" height="38" viewBox="0 0 38 38"><rect x="17" y="3" width="20" height="24" rx="3" fill="#f2f2f2"/><rect x="3" y="13" width="24" height="24" rx="3" fill="#5a5a5a"/><path d="M17 13h10v14H17z" fill="#b9b9b9"/></svg></div>
        <div class="tb-app"><svg width="36" height="36" viewBox="0 0 36 36"><circle cx="18" cy="18" r="18" fill="#34a853"/><path d="M18 0a18 18 0 0 1 16 9H18a9 9 0 0 0-8 5L3 7A18 18 0 0 1 18 0z" fill="#ea4335"/><path d="M34 9a18 18 0 0 1-16 27l8-13a9 9 0 0 0 0-14z" fill="#fbbc04"/><circle cx="18" cy="18" r="8" fill="#fff"/><circle cx="18" cy="18" r="6.500" fill="#4285f4"/></svg></div>
        <div class="tb-app"><svg width="38" height="38" viewBox="0 0 38 38" fill="none"><path d="M3 36l2-9A16 16 0 1 1 12 33z" stroke="#25d366" stroke-width="3"/><path d="M13 12c-2 5 5 13 12 13l2-4-5-2-2 2c-2-1-3-3-4-5l2-2-2-5z" fill="#25d366"/></svg><span class="wa-badge">1</span></div>
        <div class="tb-app"><svg width="36" height="34" viewBox="0 0 36 34"><path d="M0 3a2 2 0 0 1 2-2h11l4 4h19v28H0z" fill="#d79a14"/><rect y="6" width="36" height="26" fill="#f7cf45"/><rect y="31" width="36" height="2" fill="#c08a12"/><rect x="11" y="19" width="14" height="13" rx="2" fill="#1a7dd0"/><path d="M14 25h8" stroke="#0b4f8a" stroke-width="2"/></svg><i class="app-dot"></i></div>
        <div class="tb-app"><svg width="36" height="36" viewBox="0 0 36 36"><rect width="36" height="36" rx="5" fill="#000"/><path d="M6 20v7M12 14v13M18 7v20M24 12v15M30 19v8" stroke="#fff" stroke-width="3.400" stroke-linecap="round"/></svg></div>
        <div class="tb-app"><svg width="36" height="36" viewBox="0 0 36 36"><path d="M0 2l24-2 12 14-2 22H4z" fill="url(#pyc)"/><rect x="6" y="6" width="24" height="24" fill="#000"/><text x="8" y="18" class="pc-tx">PC</text><path d="M9 25h9" stroke="#fff" stroke-width="2"/></svg></div>
        <div class="tb-app active">
            <svg width="30" height="36" viewBox="0 0 30 36"><rect x="20" y="0" width="10" height="36" rx="1" fill="#d9a01c"/><rect x="10" y="10" width="14" height="26" rx="1" fill="#ecbc32"/><rect x="0" y="21" width="14" height="15" rx="1" fill="url(#pbi1)"/></svg>
            <i class="app-pill"></i>
        </div>
        <div class="tb-app"><svg width="37" height="36" viewBox="0 0 37 36"><rect y="1" width="37" height="35" rx="6" fill="#f5141e"/><rect x="27" width="10" height="13" rx="2" fill="#4dbd6a"/><text x="32" y="10" class="wps-s">S</text><text x="17" y="28" class="wps-w">W</text></svg><i class="app-dot"></i></div>
        <div class="tray">
            <svg class="t-chev" width="16" height="10" viewBox="0 0 16 10" fill="none" stroke="#fff" stroke-width="1.600"><path d="M1 9l7-7 7 7"/></svg>
            <svg class="t-cloud" width="26" height="26" viewBox="0 0 26 26"><path d="M13 2a8 8 0 0 1 8 10c2 1 4 3 4 6 0 3-3 6-6 6H7c-4 0-6-3-6-6 0-3 2-5 4-6a8 8 0 0 1 8-10z" fill="#e6e6e6"/><path d="M1 15l12-7 12 10" fill="none" stroke="#888"/></svg>
            <div class="t-lang"><div>ENG</div><div>IN</div></div>
            <svg class="t-ic" width="24" height="22" viewBox="0 0 24 22" fill="none" stroke="#fff" stroke-width="1.800"><path d="M1 8a16 16 0 0 1 22 0" stroke="#8a8f96"/><path d="M5 12a10 10 0 0 1 14 0M8 15.500a6 6 0 0 1 8 0"/><circle cx="12" cy="19" r="1.400" fill="#fff"/></svg>
            <svg class="t-ic" width="26" height="24" viewBox="0 0 26 24" fill="none" stroke="#fff" stroke-width="1.500"><path d="M1 8h4l7-6v20l-7-6H1z"/><path d="M16 8c2 2 2 6 0 8M19 5c4 4 4 10 0 14M22 2c5 6 5 14 0 20"/></svg>
            <svg class="t-ic" width="26" height="22" viewBox="0 0 26 22" fill="none" stroke="#fff" stroke-width="1.600"><rect x="1" y="2" width="21" height="18" rx="4"/><rect x="4" y="5" width="11" height="12" rx="2" fill="#fff"/><path d="M24 8v6"/></svg>
            <div class="t-clock"><div>17:24</div><div>27-08-2025</div></div>
        </div>
    </div>
</body>
</html>
```

FILE: styles.css
```css
html, body {
    margin: 0;
    padding: 0;
}
body {
    width: 1919px;
    height: 1199px;
    overflow: hidden;
    display: flex;
    flex-direction: column;
    font-family: "Open Sans", "Noto Sans", sans-serif;
    color: #252423;
    background: #f3f2f1;
}
.defs {
    position: absolute;
}
svg {
    flex: none;
    display: block;
}

/* title bar */
.titlebar {
    height: 51px;
    flex: none;
    background: #3c3a38;
    color: #fff;
    display: flex;
    align-items: center;
    font-size: 17px;
}
.tb-save { margin-left: 25px; }
.tb-undo { margin-left: 22px; }
.tb-redo { margin-left: 23px; }
.doc-title {
    margin-left: 12px;
    padding-top: 7px;
    letter-spacing: -0.05px;
}
.doc-caret {
    width: 0;
    height: 0;
    margin-left: 11px;
    margin-bottom: 2px;
    border-left: 6px solid transparent;
    border-right: 6px solid transparent;
    border-top: 7px solid #fff;
}
.sign-in { margin-left: auto; font-size: 17.5px; }
.avatar { margin-left: 15px; }
.win-btn { margin-left: 50px; }
.win-btn.win-min { margin-left: 48px; }
.win-btn:last-child { margin-right: 23px; }

/* tabs */
.tabs {
    height: 54px;
    flex: none;
    background: #fafafa;
    display: flex;
    align-items: flex-start;
    padding-left: 34px;
    gap: 46.5px;
    font-size: 20.2px;
}
.tab {
    height: 42px;
    line-height: 48px;
    box-sizing: content-box;
}
.tab-file { margin-right: 9px; }
.tab.active {
    font-weight: 600;
    border-bottom: 5px solid #117865;
    color: #1b1a19;
}
.share {
    margin-left: auto;
    margin-right: 7px;
    margin-top: 6px;
    width: 125px;
    height: 36px;
    box-sizing: border-box;
    padding: 0 10px;
    border-radius: 5px;
    background: #117865;
    color: #fff;
    font-size: 17px;
    display: flex;
    align-items: center;
    gap: 12px;
}

/* ribbon */
.ribbon {
    height: 135px;
    flex: none;
    background: #fafafa;
    display: flex;
    box-shadow: 0 2px 5px rgba(0,0,0,0.18);
    position: relative;
    z-index: 2;
    box-sizing: border-box;
}
.rb-group {
    height: 132px;
    box-sizing: border-box;
    border-right: 1px solid #d6d4d2;
    display: flex;
    flex-direction: column;
}
.g1 { width: 241px; }
.g2 { width: 536px; }
.g3 { width: 173px; }
.g4 { width: 220px; }
.g5 { width: 279px; }
.g6 { width: 110px; }
.g7 { width: 87px; }
.g8 { width: 197px; }
.rb-items {
    display: flex;
    height: 106px;
    padding-top: 7px;
    box-sizing: border-box;
}
.g2 .rb-items { padding-left: 14px; }
.g3 .rb-items { padding-left: 9px; }
.g4 .rb-items { padding-left: 10px; }
.g5 .rb-items { padding-left: 10px; }
.rb-item {
    display: flex;
    flex-direction: column;
    align-items: center;
    font-size: 17px;
    line-height: 24px;
    text-align: center;
    white-space: nowrap;
}
.rb-ic {
    width: 50px;
    height: 50px;
    margin-bottom: 1px;
}
.rb-label {
    color: #252423;
    letter-spacing: -0.2px;
}
.disabled .rb-label { color: #c8c6c4; }
.dd {
    display: inline-block;
    width: 9px;
    height: 7px;
    vertical-align: 1px;
}
.disabled .dd { opacity: 0.45; }
.w42 { width: 42px; }
.w54 { width: 54px; }
.w55 { width: 55px; }
.w56 { width: 56px; }
.w58 { width: 58px; }
.w60 { width: 60px; margin-left: 12px; }
.w64 { width: 64px; }
.w66 { width: 66px; }
.w70 { width: 70px; }
.w75 { width: 75px; }
.w76 { width: 76px; }
.w80 { width: 80px; }
.w86 { width: 86px; }
.w90 { width: 90px; }
.w109 { width: 109px; }
.w112 { width: 112px; }
.w130 { width: 130px; }
.small-col {
    margin-left: 8px;
    margin-top: -2px;
    display: flex;
    flex-direction: column;
    gap: 10px;
}
.small-row {
    height: 26px;
    display: flex;
    align-items: center;
    gap: 4px;
    font-size: 17px;
    letter-spacing: -0.1px;
    color: #c8c6c4;
    white-space: nowrap;
}
.cut-ic { margin-right: 4px; }
.rb-name {
    text-align: center;
    font-size: 14.2px;
    line-height: 18px;
    color: #484644;
    margin-top: 10px;
}
.collapse {
    position: absolute;
    right: 5px;
    bottom: 7px;
}

/* main area */
.main {
    height: 852px;
    flex: none;
    display: flex;
}
.rail {
    width: 61px;
    flex: none;
    box-sizing: border-box;
    border-right: 1px solid #e1dfdd;
    display: flex;
    flex-direction: column;
}
.rail-btn {
    height: 60px;
    display: flex;
    align-items: center;
    justify-content: center;
    box-sizing: border-box;
    margin-right: -1px;
}
.rail-btn.on { border-left: 4px solid #117865; }
.rail-btn.on svg { margin-right: 4px; }
.center {
    width: 1317px;
    flex: none;
    display: flex;
    flex-direction: column;
}
.canvas-row {
    height: 799px;
    display: flex;
    background: #fff;
}
.canvas {
    width: 1268px;
    box-sizing: border-box;
    padding: 98px 0 0 129px;
    border-right: 1px solid #e1dfdd;
}
.filters {
    width: 49px;
    display: flex;
    flex-direction: column;
    align-items: center;
}
.fil-chev { margin-top: 20px; }
.fil-funnel { margin-top: 24px; margin-left: 4px; }
.fil-text {
    margin-top: 12px;
    writing-mode: vertical-rl;
    font-size: 22px;
    line-height: 24px;
    font-weight: 600;
    letter-spacing: -0.1px;
}

/* report page */
.report {
    width: 1010px;
    height: 603px;
    box-sizing: border-box;
    overflow: hidden;
    background: linear-gradient(176deg, #181918 0%, #1a1c1a 35%, #232923 60%, #2e3f31 80%, #40624b 100%);
    box-shadow: 0 0 6px rgba(0,0,0,0.2);
}
.rep-head {
    width: 994px;
    height: 54px;
    margin-left: 11px;
    box-sizing: border-box;
    border: 2px solid #27622f;
    border-top-width: 1px;
    border-radius: 14px;
    background: #1f4a28;
    display: flex;
    justify-content: center;
    margin-bottom: 11px;
}
.rep-title {
    width: 377px;
    height: 47px;
    margin: 1px 0 0 -28px;
    background: #245b2f;
    border-radius: 3px;
    color: #fff;
    font-weight: 700;
    font-size: 24.8px;
    line-height: 50px;
    padding-left: 6px;
    box-sizing: border-box;
    white-space: nowrap;
    box-shadow: 0 2px 8px rgba(36,91,47,0.6);
}
.card {
    position: relative;
    box-sizing: border-box;
    border: 2px solid #235a2c;
    background: rgba(30,56,36,0.5);
    margin-left: 9px;
    width: 184px;
    text-align: center;
    padding-left: 4px;
    overflow: hidden;
}
.card-total {
    margin-left: 8px;
    width: 182px;
    height: 157px;
    padding-top: 22px;
    padding-left: 8px;
    background: #1a2a1e;
}
.card-bev {
    height: 168px;
    margin-top: 17px;
    padding-top: 33px;
    background: #1d2f21;
}
.card-phev {
    height: 171px;
    margin-top: 13px;
    padding-top: 37px;
    background: #223a27;
}
.c-label {
    position: relative;
    font-family: "DejaVu Serif", "Liberation Serif", serif;
    font-weight: 700;
    font-size: 12.3px;
    line-height: 18px;
    color: #f4f4f4;
    letter-spacing: -0.55px;
}
.c-value {
    position: relative;
    font-family: "Roboto", "Inter", sans-serif;
    font-weight: 500;
    font-size: 22px;
    line-height: 28px;
    margin-top: 2px;
    color: #58cb6c;
}
.c-value.big {
    font-size: 26.5px;
    line-height: 36px;
    margin-top: 7px;
    letter-spacing: 0.2px;
}
.c-label.second { margin-top: 12px; }
.card-total .c-label.second { margin-top: 11px; }
.card-total .c-value.big:last-child { margin-top: 6px; }
.card-phev .c-label.second { margin-top: 10px; }
.card-phev > :nth-child(2),
.card-phev > :nth-child(3) { padding-left: 5px; }
.ring {
    position: absolute;
}
.ring circle {
    fill: none;
    stroke-width: 12;
}
.ring .track { stroke: #28592f; }
.ring .arc { stroke: #8ae68f; }
.ring-bev { left: 12px; top: -1px; }
.ring-phev { left: 20px; top: 8px; }

/* page tabs */
.pagebar {
    height: 53px;
    flex: none;
    display: flex;
    background: #f3f2f1;
}
.view-btn {
    display: flex;
    justify-content: center;
    box-sizing: border-box;
}
.view-btn.desktop {
    width: 36px;
    height: 46px;
    margin-left: 15px;
    padding-top: 11px;
    border-bottom: 4px solid #117865;
    border-radius: 0 0 3px 3px;
}
.view-btn.phone {
    margin-left: 39px;
    padding-top: 7px;
}
.pg-arrow {
    margin-left: 31px;
    margin-top: 18px;
}
.pg-arrow.next { margin-left: 26px; }
.page-tab {
    width: 112px;
    margin-left: 11px;
    box-sizing: border-box;
    background: #fff;
    border-bottom: 6px solid #117865;
    text-align: center;
    font-size: 17px;
    font-weight: 600;
    line-height: 54px;
}
.page-add {
    width: 59px;
    margin-left: 1px;
    background: #117865;
    display: flex;
    align-items: center;
    justify-content: center;
}

/* visualizations pane */
.viz {
    width: 272px;
    flex: none;
    box-sizing: border-box;
    border-left: 1px solid #e1dfdd;
    border-right: 1px solid #e1dfdd;
}
.pane-head {
    height: 60px;
    padding: 0 12px 3px 12px;
    box-sizing: border-box;
    display: flex;
    align-items: center;
    justify-content: space-between;
    font-size: 23px;
    font-weight: 600;
    letter-spacing: -0.4px;
    color: #252423;
}
.build-label {
    padding-left: 12px;
    margin-top: -3px;
    line-height: 24px;
    font-size: 17px;
    font-weight: 600;
    letter-spacing: -0.2px;
    color: #333;
}
.build-row {
    display: flex;
    align-items: center;
    margin-top: 5px;
    padding-left: 11px;
}
.build-tile {
    width: 48px;
    height: 48px;
    background: #d2d0ce;
    border-radius: 3px;
    display: flex;
    align-items: center;
    justify-content: center;
}
.fmt-ic { margin-left: 56px; }
.notch-line {
    position: relative;
    margin-top: 19px;
    border-bottom: 1px solid #a8a6a4;
    height: 0;
}
.notch {
    position: absolute;
    left: 22px;
    top: -13px;
}
.gallery {
    height: 351px;
    box-sizing: border-box;
    border-bottom: 1px solid #e1dfdd;
    padding: 16px 0 0 15px;
    display: grid;
    grid-template-columns: repeat(6, 42px);
    grid-auto-rows: 42px;
}
.gi {
    width: 28px;
    height: 28px;
}
.gi-text {
    width: 28px;
    height: 28px;
    line-height: 28px;
    font-weight: 700;
    text-align: center;
    white-space: nowrap;
}
.gi-r {
    font-size: 23px;
    color: #1a6fb5;
    padding-right: 3px;
    box-sizing: border-box;
}
.gi-py {
    font-size: 24px;
    color: #2b88d8;
    letter-spacing: -1px;
}
.ax {
    fill: none;
    stroke: #444;
    stroke-width: 1.5;
}
.gi-more {
    font-size: 10px;
    line-height: 20px;
    letter-spacing: 1.5px;
    color: #333;
    white-space: nowrap;
    grid-column: span 2;
    padding-left: 4px;
}
.well-title {
    padding-left: 18px;
    margin-top: 14px;
    font-size: 17px;
    line-height: 24px;
    color: #333;
}
.well {
    margin: 7px 9px 0 5px;
    height: 41px;
    box-sizing: border-box;
    background: #fff;
    border: 1px dashed #c8c6c4;
    border-radius: 3px;
    padding-left: 15px;
    font-size: 17.2px;
    line-height: 37px;
    color: #333;
    white-space: nowrap;
}
.well-drill {
    height: 37px;
    margin-top: 15px;
    padding-left: 12px;
    line-height: 34px;
}
.drill {
    padding-left: 18px;
    margin-top: 17px;
    line-height: 24px;
    font-size: 17px;
    font-weight: 600;
    color: #484644;
}
.toggle-row {
    margin-top: 9px;
    height: 31px;
    padding: 0 33px 0 18px;
    display: flex;
    align-items: center;
    justify-content: space-between;
    font-size: 17px;
    color: #333;
}
.toggle {
    width: 48px;
    height: 24px;
    box-sizing: border-box;
    border-radius: 12px;
    display: flex;
    align-items: center;
    justify-content: center;
    gap: 3px;
    font-size: 13px;
}
.toggle b { font-weight: 400; }
.toggle i {
    width: 12px;
    height: 12px;
    border-radius: 50%;
}
.toggle.off {
    background: #fff;
    border: 1px solid #8a8886;
    color: #777;
}
.toggle.off i { background: #555; }
.toggle.on {
    background: #117865;
    color: #fff;
}
.toggle.on i { background: #fff; }

/* data pane */
.data {
    flex: 1;
    position: relative;
}
.data-head { padding-left: 13px; padding-right: 11px; }
.data-search {
    margin: 8px 6px 0 6px;
    height: 35px;
    box-sizing: border-box;
    border: 1px solid #d6d4d2;
    border-bottom-color: #8a8886;
    border-radius: 6px;
    background: #fff;
    display: flex;
    align-items: center;
    padding-left: 18px;
    gap: 10px;
    font-size: 19px;
    line-height: 35px;
    color: #777;
}
.data-search span { padding-top: 2px; }
.tree-root {
    margin-top: 15px;
    height: 36px;
    display: flex;
    align-items: center;
    padding-left: 20px;
    gap: 7px;
    font-size: 17.2px;
    color: #333;
    letter-spacing: -0.2px;
}
.tree-root span { margin-left: 1px; white-space: nowrap; }
.field {
    height: 36px;
    display: flex;
    align-items: center;
    padding-left: 66px;
    font-size: 17px;
    color: #333;
    white-space: nowrap;
}
.chk {
    width: 17px;
    height: 17px;
    box-sizing: border-box;
    border: 1px solid #8a8886;
    border-radius: 3px;
    background: #fbfbfb;
    margin-right: 13px;
}
.f-ic {
    width: 18px;
    height: 22px;
    margin-right: 9px;
}
.scrollbar {
    position: absolute;
    right: 5px;
    top: 116px;
    width: 12px;
    height: 659px;
    background: #8a8a8a;
}

/* status bar */
.status {
    height: 35px;
    flex: none;
    box-sizing: border-box;
    border-top: 1px solid #e1dfdd;
    background: #f3f2f1;
    display: flex;
    align-items: center;
    justify-content: space-between;
    padding-left: 6px;
    font-size: 17.4px;
    color: #484644;
}
.status-page { padding-top: 2px; }
.zoom {
    display: flex;
    align-items: center;
    margin-right: 25px;
}
.z-minus, .z-plus {
    font-size: 22px;
    font-weight: 600;
    line-height: 20px;
    color: #555;
}
.z-track {
    position: relative;
    width: 150px;
    height: 1px;
    background: #666;
    margin: 0 8px 0 9px;
}
.z-thumb {
    position: absolute;
    left: 32px;
    top: -8px;
    width: 6px;
    height: 17px;
    background: #605e5c;
}
.z-tick {
    position: absolute;
    left: 75px;
    top: -3px;
    width: 1px;
    height: 7px;
    background: #605e5c;
}
.z-pct {
    margin: 0 28px 0 20px;
    font-size: 17.5px;
    color: #777;
}

/* windows taskbar */
.taskbar {
    height: 72px;
    flex: none;
    box-sizing: border-box;
    border-top: 2px solid #0d0d0d;
    background: linear-gradient(90deg, #14253e 0%, #17263c 45%, #1b212b 75%, #1d2129 100%);
    display: flex;
    align-items: center;
    color: #fff;
}
.weather {
    width: 472px;
    margin-left: 28px;
    display: flex;
    align-items: center;
    gap: 10px;
    font-size: 17.6px;
    line-height: 24px;
    flex: none;
}
.w-sub { color: #dcdfe4; }
.tb-search {
    width: 329px;
    height: 47px;
    flex: none;
    margin-left: 19px;
    margin-right: 4px;
    box-sizing: border-box;
    border: 1px solid #46505f;
    border-radius: 24px;
    background: #38465a;
    display: flex;
    align-items: center;
    padding-left: 17px;
    font-size: 19px;
    color: #d9dce1;
}
.tb-search span { margin-left: 14px; }
.ganesh { margin-left: auto; margin-right: 17px; }
.tb-app {
    position: relative;
    width: 66px;
    height: 70px;
    flex: none;
    display: flex;
    align-items: center;
    justify-content: center;
}
.tb-app.active::before {
    content: "";
    position: absolute;
    left: 4px;
    right: 3px;
    top: 5px;
    bottom: 4px;
    background: #2c323c;
    border-radius: 6px;
}
.tb-app.active svg { position: relative; }
.wa-badge {
    position: absolute;
    left: 34px;
    top: 11px;
    width: 24px;
    height: 24px;
    border-radius: 50%;
    background: #d8a3e3;
    color: #222;
    text-align: center;
    font-size: 15px;
    line-height: 24px;
}
.app-dot {
    position: absolute;
    left: 30px;
    bottom: 6px;
    width: 6px;
    height: 6px;
    border-radius: 50%;
    background: #8a8f96;
}
.app-pill {
    position: absolute;
    left: 21px;
    bottom: 5px;
    width: 24px;
    height: 5px;
    border-radius: 3px;
    background: #d8a3e3;
}
.tray {
    margin-left: auto;
    width: 401px;
    display: flex;
    align-items: center;
    padding-right: 27px;
    box-sizing: border-box;
    font-size: 17.6px;
    line-height: 24px;
}
.t-chev { margin-left: 1px; }
.t-cloud { margin-left: 25px; }
.t-lang { width: 40px; margin-left: 26px; text-align: center; }
.t-ic { margin-left: 10px; }
.t-lang + .t-ic { margin-left: 25px; }
.t-clock { margin-left: auto; text-align: right; font-size: 18px; }

/* text inside icons */
.xl { font: 700 17px "Open Sans", sans-serif; fill: #fff; text-anchor: middle; }
.a-box { font: 400 28px "Open Sans", sans-serif; fill: #2b88d8; text-anchor: middle; }
.fx { font: italic 400 24px "Liberation Serif", serif; fill: #c8c6c4; text-anchor: middle; }
.rail-tx { font: 700 10px "Open Sans", sans-serif; fill: #7c7c7c; }
.gi-num { font: 400 12.5px "Open Sans", sans-serif; fill: #2b88d8; text-anchor: middle; letter-spacing: -0.5px; }
.pc-tx { font: 700 11px "Liberation Mono", monospace; fill: #fff; }
.wps-s { font: 700 10px "Open Sans", sans-serif; fill: #fff; text-anchor: middle; }
.wps-w { font: 700 22px "Open Sans", sans-serif; fill: #fff; text-anchor: middle; }
```
